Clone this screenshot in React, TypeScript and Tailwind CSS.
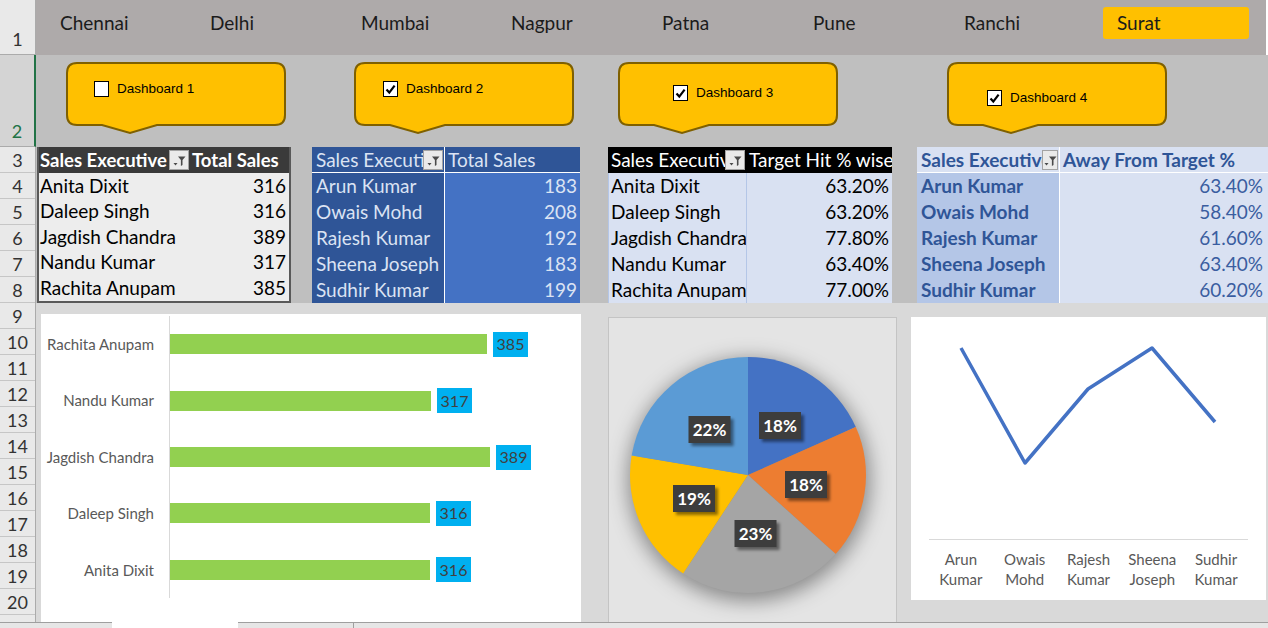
import React from 'react';

const CAL = "font-['Lato','Carlito',sans-serif]";

const CITIES = [
  { name: 'Chennai', cls: 'w-[150px]' },
  { name: 'Delhi', cls: 'w-[151px]' },
  { name: 'Mumbai', cls: 'w-[150px]' },
  { name: 'Nagpur', cls: 'w-[151px]' },
  { name: 'Patna', cls: 'w-[151px]' },
  { name: 'Pune', cls: 'w-[151px]' },
  { name: 'Ranchi', cls: 'w-[139px]' },
];

const CALLOUTS = [
  { label: 'Dashboard 1', checked: false, wrap: 'ml-[30px]', inner: 'pl-[28px] pt-[17px]' },
  { label: 'Dashboard 2', checked: true, wrap: 'ml-[68px]', inner: 'pl-[29px] pt-[17px]' },
  { label: 'Dashboard 3', checked: true, wrap: 'ml-[44px]', inner: 'pl-[55px] pt-[21px]' },
  { label: 'Dashboard 4', checked: true, wrap: 'ml-[109px]', inner: 'pl-[40px] pt-[26px]' },
];

const SALES = [
  ['Anita Dixit', '316'],
  ['Daleep Singh', '316'],
  ['Jagdish Chandra', '389'],
  ['Nandu Kumar', '317'],
  ['Rachita Anupam', '385'],
];
const SALES2 = [
  ['Arun Kumar', '183'],
  ['Owais Mohd', '208'],
  ['Rajesh Kumar', '192'],
  ['Sheena Joseph', '183'],
  ['Sudhir Kumar', '199'],
];
const HIT = [
  ['Anita Dixit', '63.20%'],
  ['Daleep Singh', '63.20%'],
  ['Jagdish Chandra', '77.80%'],
  ['Nandu Kumar', '63.40%'],
  ['Rachita Anupam', '77.00%'],
];
const AWAY = [
  ['Arun Kumar', '63.40%'],
  ['Owais Mohd', '58.40%'],
  ['Rajesh Kumar', '61.60%'],
  ['Sheena Joseph', '63.40%'],
  ['Sudhir Kumar', '60.20%'],
];

const BARS = [
  { name: 'Rachita Anupam', v: 385 },
  { name: 'Nandu Kumar', v: 317 },
  { name: 'Jagdish Chandra', v: 389 },
  { name: 'Daleep Singh', v: 316 },
  { name: 'Anita Dixit', v: 316 },
];

const PIE = [
  { v: 316, color: '#4472c4', label: '18%', x: 171, y: 107.5 },
  { v: 316, color: '#ed7d31', label: '18%', x: 197, y: 166.5 },
  { v: 389, color: '#a5a5a5', label: '23%', x: 146.5, y: 215.5 },
  { v: 317, color: '#ffc000', label: '19%', x: 85, y: 180.5 },
  { v: 385, color: '#5b9bd5', label: '22%', x: 100.5, y: 111.5 },
];

const LINE_LABELS = [
  ['Arun', 'Kumar'],
  ['Owais', 'Mohd'],
  ['Rajesh', 'Kumar'],
  ['Sheena', 'Joseph'],
  ['Sudhir', 'Kumar'],
];

function FilterButton({ w = 'w-[20px]' }: { w?: string }) {
  return (
    <div className={`${w} h-[20px] shrink-0 bg-[#eaeaea] border border-[#a3a3a3] flex items-center justify-center`}>
      <svg width="14" height="14" viewBox="0 0 14 14">
        <path d="M6 3.5h7.5l-3 3.5v5l-1.6 1v-6z" fill="#4a4a4a" />
        <path d="M1.5 10h4l-2 2.6z" fill="#4a4a4a" />
      </svg>
    </div>
  );
}

type TableProps = {
  wrap: string;
  head: string;
  headA: string;
  headB: string;
  cellA: string;
  cellB: string;
  rowH: string;
  titleA: string;
  titleB: string;
  rows: string[][];
  filterW?: string;
};

function DataTable(p: TableProps) {
  return (
    <div className={`${p.wrap} flex flex-col shrink-0 ${CAL} text-[19px]`}>
      <div className={`${p.head} flex h-[26px]`}>
        <div className={`${p.headA} flex items-center min-w-0`}>
          <span className="flex-1 min-w-0 overflow-hidden whitespace-nowrap leading-[26px]">{p.titleA}</span>
          <FilterButton w={p.filterW} />
        </div>
        <div className={`${p.headB} overflow-hidden whitespace-nowrap leading-[26px]`}>{p.titleB}</div>
      </div>
      {p.rows.map(([a, b]) => (
        <div key={a} className={`flex ${p.rowH}`}>
          <div className={`${p.cellA} overflow-hidden whitespace-nowrap flex items-center`}>{a}</div>
          <div className={`${p.cellB} overflow-hidden whitespace-nowrap flex items-center justify-end`}>{b}</div>
        </div>
      ))}
    </div>
  );
}

function Callout({ c }: { c: (typeof CALLOUTS)[number] }) {
  return (
    <div className={`${c.wrap} relative w-[220px] h-[72px] shrink-0`}>
      <svg className="absolute inset-0" width="222" height="74" viewBox="0 0 222 74">
        <path
          d="M11 1 H209 Q219 1 219 11 V53 Q219 63 209 63 H91 L64 71 L36 63 H11 Q1 63 1 53 V11 Q1 1 11 1 Z"
          fill="#ffc000"
          stroke="#7f6000"
          strokeWidth="2"
        />
      </svg>
      <div className={`relative flex items-center gap-[8px] ${c.inner}`}>
        <div className="w-[15px] h-[16px] bg-white border border-black flex items-center justify-center">
          {c.checked && (
            <svg width="11" height="11" viewBox="0 0 11 11">
              <path d="M1.5 5.5 L4.3 8.6 L9.6 1.6" fill="none" stroke="#000" strokeWidth="2.2" />
            </svg>
          )}
        </div>
        <span className="font-['Liberation_Sans',Arial,sans-serif] text-[13.5px] text-black">{c.label}</span>
      </div>
    </div>
  );
}

function pt(cx: number, cy: number, r: number, deg: number) {
  const a = (deg * Math.PI) / 180;
  return [cx + r * Math.sin(a), cy - r * Math.cos(a)];
}

function PieChart() {
  const total = PIE.reduce((s, d) => s + d.v, 0);
  const cx = 139;
  const cy = 157;
  const r = 118;
  let start = 0;
  const slices = PIE.map((d) => {
    const end = start + (d.v / total) * 360;
    const [x1, y1] = pt(cx, cy, r, start);
    const [x2, y2] = pt(cx, cy, r, end);
    const large = end - start > 180 ? 1 : 0;
    const path = `M${cx} ${cy} L${x1} ${y1} A${r} ${r} 0 ${large} 1 ${x2} ${y2} Z`;
    start = end;
    return { ...d, path };
  });
  return (
    <svg width="287" height="304" viewBox="0 0 287 304">
      <defs>
        <filter id="pshadow" x="-30%" y="-30%" width="160%" height="160%">
          <feGaussianBlur stdDeviation="10" />
        </filter>
        <filter id="lshadow" x="-30%" y="-30%" width="160%" height="160%">
          <feGaussianBlur stdDeviation="1.6" />
        </filter>
      </defs>
      <circle cx={cx + 1} cy={cy + 5} r={r + 3} fill="rgba(0,0,0,0.4)" filter="url(#pshadow)" />
      {slices.map((s, i) => (
        <path key={i} d={s.path} fill={s.color} />
      ))}
      {slices.map((s, i) => (
        <g key={'l' + i}>
          <rect x={s.x - 21 + 3} y={s.y - 13.5 + 3} width="42" height="27" fill="rgba(0,0,0,0.45)" filter="url(#lshadow)" />
          <rect x={s.x - 21} y={s.y - 13.5} width="42" height="27" fill="#3d3d3d" />
          <text
            x={s.x}
            y={s.y + 6}
            textAnchor="middle"
            fill="#fff"
            fontSize="17"
            fontWeight="700"
            fontFamily="Lato, sans-serif"
          >
            {s.label}
          </text>
        </g>
      ))}
    </svg>
  );
}

export default function App() {
  return (
    <div className={`w-[1268px] h-[628px] overflow-hidden flex flex-col bg-[#d9d9d9] ${CAL}`}>
      {/* row 1: cities */}
      <div className="flex h-[55px] shrink-0">
        <div className="w-[36px] shrink-0 bg-[#e9e9e9] border-r border-b border-[#ababab] flex items-end justify-center pb-[1px] text-[18px] text-[#333]">
          1
        </div>
        <div className="flex-1 bg-[#aeaaaa] flex items-start pt-[7px] pl-[24px] text-[19px] text-[#1b1b1b] border-r-2 border-white">
          {CITIES.map((c) => (
            <div key={c.name} className={`${c.cls} h-[32px] flex items-center shrink-0`}>
              {c.name}
            </div>
          ))}
          <div className="w-[146px] h-[32px] bg-[#ffc000] rounded-[3px] flex items-center pl-[14px]">Surat</div>
        </div>
      </div>

      {/* row 2: dashboard callouts */}
      <div className="flex h-[92px] shrink-0">
        <div className="w-[36px] shrink-0 bg-[#d4d4d4] border-r-2 border-[#217346] border-b border-b-[#ababab] flex items-end justify-center pb-[1px] text-[18px] text-[#217346]">
          2
        </div>
        <div className="flex-1 bg-[#bfbfbf] flex items-start pt-[7px]">
          {CALLOUTS.map((c) => (
            <Callout key={c.label} c={c} />
          ))}
        </div>
      </div>

      {/* rows 3-20 */}
      <div className="flex h-[475px] shrink-0">
        <div className="w-[36px] shrink-0 bg-[#e9e9e9] border-r border-[#ababab] flex flex-col text-[18px] text-[#333]">
          {Array.from({ length: 18 }, (_, i) => i + 3).map((n) => (
            <div key={n} className="h-[26px] shrink-0 border-b border-[#c6c6c6] flex items-end justify-center leading-[24px]">
              {n}
            </div>
          ))}
          <div className="flex-1" />
        </div>

        <div className="flex-1 flex flex-col">
          {/* tables */}
          <div className="h-[156px] shrink-0 bg-[#bfbfbf] flex items-start">
            <DataTable
              wrap="ml-[1px] w-[254px] h-[156px] border-l-2 border-r-2 border-b-2 border-[#595959] bg-[#ededed] text-black"
              head="bg-[#3a3a3a] text-white font-bold text-[18.5px]"
              headA="w-[150px] pl-[1px]"
              headB="w-[100px] pl-[3px]"
              cellA="w-[150px] pl-[1px]"
              cellB="w-[100px] pr-[3px]"
              rowH="h-[25.6px]"
              titleA="Sales Executive"
              titleB="Total Sales"
              rows={SALES}
            />
            <DataTable
              wrap="ml-[21px] w-[268px] h-[156px] text-[#dbe3f3]"
              head="bg-[#2f5597] border-b border-white"
              headA="w-[132px] pl-[4px] pr-[1px]"
              headB="w-[136px] pl-[3px] border-l border-white"
              cellA="w-[132px] pl-[4px] bg-[#2f5597]"
              cellB="w-[136px] pr-[3px] bg-[#4472c4] border-l border-white"
              rowH="h-[26px]"
              titleA="Sales Executive"
              titleB="Total Sales"
              rows={SALES2}
            />
            <DataTable
              wrap="ml-[28px] w-[284px] h-[156px] text-black"
              head="bg-black text-white"
              headA="w-[138px] pl-[3px] pr-[1px]"
              headB="w-[146px] pl-[3px]"
              cellA="w-[138px] pl-[2px] bg-[#d9e1f2] border-l border-[#b4c6e7]"
              cellB="w-[146px] pr-[3px] bg-[#d9e1f2] border-l border-[#b4c6e7]"
              rowH="h-[26px]"
              titleA="Sales Executive"
              titleB="Target Hit % wise"
              rows={HIT}
            />
            <DataTable
              wrap="ml-[25px] w-[351px] h-[156px] text-[#2f5597]"
              head="bg-[#d9e1f2] font-bold border-b border-white"
              headA="w-[142px] pl-[4px] pr-[1px]"
              headB="w-[209px] pl-[3px] border-l border-white"
              cellA="w-[142px] pl-[4px] bg-[#b4c6e7] font-bold"
              cellB="w-[209px] pr-[5px] bg-[#d9e1f2] border-l border-white text-[#3a5da0]"
              rowH="h-[26px]"
              titleA="Sales Executive"
              titleB="Away From Target %"
              rows={AWAY}
              filterW="w-[16px]"
            />
          </div>

          {/* charts */}
          <div className="flex-1 flex items-start">
            {/* bar chart */}
            <div className="ml-[5px] mt-[11px] w-[540px] h-[308px] bg-white flex pt-[2px] shrink-0">
              <div className="w-[128px] h-[282px] flex flex-col text-[15px] text-[#595959]">
                {BARS.map((b) => (
                  <div key={b.name} className="flex-1 flex items-center justify-end pr-[15px] whitespace-nowrap">
                    {b.name}
                  </div>
                ))}
              </div>
              <div className="flex-1 h-[282px] border-l border-[#d9d9d9] flex flex-col">
                {BARS.map((b) => (
                  <div key={b.name} className="flex-1 flex items-center">
                    <div className="h-[20px] bg-[#92d050]" style={{ width: Math.round(b.v * 0.8226) }} />
                    <div className="ml-[6px] w-[35px] h-[25px] bg-[#00b0f0] text-[#404040] text-[16px] flex items-center justify-center">
                      {b.v}
                    </div>
                  </div>
                ))}
              </div>
            </div>

            {/* pie chart */}
            <div className="ml-[27px] mt-[14px] w-[289px] h-[306px] bg-[#e4e4e4] border border-[#c4c4c4] shrink-0">
              <PieChart />
            </div>

            {/* line chart */}
            <div className="ml-[14px] mt-[14px] w-[355px] h-[283px] bg-white shrink-0">
              <svg width="355" height="222" viewBox="0 0 355 222">
                <polyline
                  points="50,31 114,146 177,72 241,31 304,105"
                  fill="none"
                  stroke="#4472c4"
                  strokeWidth="3.5"
                  strokeLinejoin="round"
                />
              </svg>
              <div className="mx-[18px] border-t border-[#d9d9d9] grid grid-cols-5 pt-[9px] text-[15px] leading-[20px] text-[#595959] text-center">
                {LINE_LABELS.map(([a, b]) => (
                  <div key={a}>
                    <div>{a}</div>
                    <div>{b}</div>
                  </div>
                ))}
              </div>
            </div>
          </div>
        </div>
      </div>

      {/* sheet tabs strip */}
      <div className="h-[6px] shrink-0 flex">
        <div className="w-[112px] bg-[#e6e6e6] border-t border-[#9f9f9f]" />
        <div className="w-[126px] bg-white" />
        <div className="flex-1 bg-[#e6e6e6] border-t border-[#9f9f9f] flex">
          <div className="ml-[115px] w-px h-full bg-[#9f9f9f]" />
        </div>
      </div>
    </div>
  );
}
